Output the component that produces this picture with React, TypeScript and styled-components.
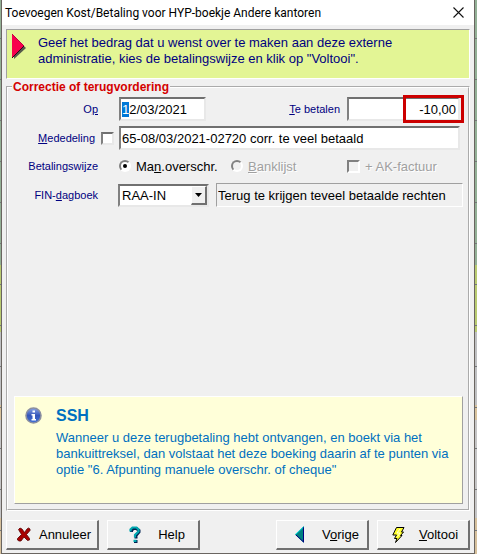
import React, { useEffect, useRef } from "react";
import styled, { createGlobalStyle, css } from "styled-components";

const navy = "#000080";

const GlobalStyle = createGlobalStyle`
  * { box-sizing: border-box; }
  body {
    margin: 0;
    font-family: "Liberation Sans", Arial, sans-serif;
    font-size: 13px;
    color: #000;
  }
  button, input, select { font: inherit; color: inherit; margin: 0; }
`;

const Desktop = styled.div`
  display: flex;
  min-height: 100vh;
  padding: 0 2px 0 1px;
  background:
    repeating-linear-gradient(transparent 0 38px, #76787a 38px 39px, transparent 39px 41px),
    linear-gradient(#93b096 0 265px, #b9cb70 265px 332px, #bfc0c2 332px 405px, #d8c29c 405px 420px, #c5c5c6 420px 518px, #d6c09c 518px);
`;

const Dialog = styled.main`
  flex: 1;
  min-width: 0;
  display: flex;
  flex-direction: column;
  background: #f0f0f0;
  border: solid #6a6560;
  border-width: 0 1px 1px;
`;

const TitleBar = styled.header`
  display: flex;
  justify-content: space-between;
  align-items: center;
  height: 25px;
  padding: 0 10px 0 3px;
  background: #fff;
  font-family: Roboto, "Noto Sans", sans-serif;
  font-size: 12px;
`;

const Title = styled.h1`
  margin: 0;
  font: inherit;
  white-space: nowrap;
`;

const CloseButton = styled.button`
  display: flex;
  padding: 0;
  border: 0;
  background: none;
`;

const Content = styled.div`
  flex: 1;
  display: flex;
  flex-direction: column;
  padding: 4px 4px 3px;
`;

const Banner = styled.section`
  display: flex;
  gap: 12px;
  height: 50px;
  padding: 4px 5px;
  background: #e3f595;
  border: 1px solid;
  border-color: #a0a0a0 #fff #fff #a0a0a0;
  color: ${navy};
  line-height: 16px;
  svg { flex: none; }
`;

const BannerText = styled.p`
  margin: 1px 0 0;
`;

const Group = styled.fieldset`
  flex: 1;
  display: flex;
  flex-direction: column;
  min-width: 0;
  margin: 1px 0 9px;
  padding: 2px 5px 5px 6px;
  border: 2px groove #fff;
`;

const Legend = styled.legend`
  margin-left: -2px;
  padding: 0 1px;
  color: #d40000;
  font-size: 12px;
  font-weight: bold;
  line-height: 14px;
`;

const Form = styled.div`
  display: grid;
  grid-template-columns: 84px minmax(0, 1fr);
  grid-template-rows: 26px 32px 24px 34px;
  column-gap: 21px;
  align-items: center;
`;

const FieldLabel = styled.label`
  color: ${navy};
  font-size: 11px;
  text-align: right;
  white-space: nowrap;
`;

const LabelWithCheck = styled.div`
  display: flex;
  justify-content: flex-end;
  align-items: center;
  gap: 6px;
  margin-right: -16px;
`;

const Row = styled.div<{ $inset?: number }>`
  display: flex;
  align-items: center;
  padding-right: ${(p) => p.$inset ?? 0}px;
`;

const sunken = css`
  border: 2px solid;
  border-color: #707070 #e8e8e8 #e8e8e8 #808080;
  background: #fff;
`;

const TextBox = styled.input<{ $width?: string; $readonly?: boolean }>`
  ${sunken}
  width: ${(p) => p.$width ?? "100%"};
  height: 24px;
  padding: 0 1px;
  border-radius: 0;
  outline: none;
  ${(p) =>
    p.$readonly &&
    css`
      border-width: 1px;
      border-color: #a0a0a0 #fff #fff #a0a0a0;
      background: #f0f0f0;
    `}
  &::selection { background: #0078d7; color: #fff; }
`;

const AmountLabel = styled(FieldLabel)`
  margin: 0 7px 0 auto;
`;

const AmountBox = styled.div`
  position: relative;
  width: 113px;
  input { text-align: right; padding-right: 2px; }
`;

const Highlight = styled.span`
  position: absolute;
  top: -2px;
  right: -4px;
  width: 61px;
  height: 28px;
  border: 3px solid #cc0000;
  pointer-events: none;
`;

const CheckBox = styled.input.attrs({ type: "checkbox" })`
  ${sunken}
  appearance: none;
  flex: none;
  width: 13px;
  height: 13px;
  &:disabled { background: #f0f0f0; border-color: #808080 #fff #fff #808080; }
`;

const Radio = styled.input.attrs({ type: "radio" })`
  appearance: none;
  flex: none;
  display: grid;
  place-items: center;
  width: 12px;
  height: 12px;
  border: 2px solid;
  border-color: #808080 #fff #fff #808080;
  border-radius: 50%;
  background: #fff;
  &:checked::after {
    content: "";
    width: 4px;
    height: 4px;
    border-radius: 50%;
    background: #000;
  }
  &:disabled { background: #f0f0f0; }
`;

const Choice = styled.label<{ $disabled?: boolean }>`
  display: flex;
  align-items: center;
  gap: 5px;
  white-space: nowrap;
  ${(p) => p.$disabled && css`color: #a0a0a0; text-shadow: 1px 1px #fff;`}
`;

const Choices = styled.div`
  display: grid;
  grid-template-columns: 112px 116px auto;
  justify-content: start;
`;

const Combo = styled.div`
  ${sunken}
  flex: none;
  display: grid;
  width: 91px;
  height: 23px;
  margin: 0 7px 0 -1px;
  > * { grid-area: 1 / 1; }
`;

const Select = styled.select`
  appearance: none;
  width: 100%;
  height: 100%;
  padding: 0 18px 0 2px;
  border: 0;
  border-radius: 0;
  outline: none;
  background: #fff;
`;

const ComboArrow = styled.span`
  justify-self: end;
  display: grid;
  place-items: center;
  width: 16px;
  border: solid;
  border-width: 1px 2px 2px 1px;
  border-color: #fff #707070 #707070 #fff;
  background: #f0f0f0;
  pointer-events: none;
`;

const Note = styled.section`
  display: flex;
  gap: 14px;
  min-height: 108px;
  margin-top: auto;
  padding: 10px;
  background: #ffffd9;
  border: 1px solid;
  border-color: #fff #a0a0a0 #a0a0a0 #fff;
  color: #0070c0;
`;

const NoteIcon = styled.svg`
  flex: none;
  width: 17px;
  height: 17px;
`;

const NoteTitle = styled.h2`
  margin: 0 0 5px;
  font-size: 16px;
  line-height: 18px;
`;

const NoteText = styled.p`
  margin: 0;
  line-height: 16px;
`;

const Actions = styled.footer`
  display: grid;
  grid-template-columns: 93px 93px 1fr 93px 93px;
  column-gap: 8px;
`;

const ActionButton = styled.button<{ $gap: number; $inset?: number }>`
  display: flex;
  align-items: center;
  justify-content: center;
  gap: ${(p) => p.$gap}px;
  height: 30px;
  padding: 0 0 0 ${(p) => p.$inset ?? 4}px;
  border: solid;
  border-width: 1px 2px 2px 1px;
  border-color: #fff #707070 #707070 #fff;
  background: #f0f0f0;
  svg { flex: none; }
`;

const Spacer = styled.span``;

export default function App() {
  const dateRef = useRef<HTMLInputElement>(null);

  useEffect(() => {
    dateRef.current?.focus();
    dateRef.current?.setSelectionRange(0, 1);
  }, []);

  return (
    <>
      <GlobalStyle />
      <Desktop>
        <Dialog>
          <TitleBar>
            <Title>Toevoegen Kost/Betaling voor HYP-boekje Andere kantoren</Title>
            <CloseButton type="button" aria-label="Sluiten">
              <svg width="11" height="11" viewBox="0 0 11 11" stroke="#111" strokeWidth="1.1">
                <path d="M.5.5l10 10M10.5.5l-10 10" />
              </svg>
            </CloseButton>
          </TitleBar>
          <Content>
            <Banner>
              <svg width="14" height="25" viewBox="0 0 14 25">
                <path d="M2 3 14 14 2 25Z" fill="#55584a" />
                <path d="M0 0 12 12 0 24Z" fill="#f8004c" />
                <path d="M0 0 12 12" stroke="#c00040" />
                <path d="M0 24 12 12" stroke="#300018" />
              </svg>
              <BannerText>
                Geef het bedrag dat u wenst over te maken aan deze externe
                <br />
                administratie, kies de betalingswijze en klik op "Voltooi".
              </BannerText>
            </Banner>
            <Group>
              <Legend>Correctie of terugvordering</Legend>
              <Form>
                <FieldLabel htmlFor="date">O<u>p</u></FieldLabel>
                <Row $inset={3}>
                  <TextBox id="date" ref={dateRef} $width="87px" defaultValue="12/03/2021" />
                  <AmountLabel htmlFor="amount"><u>T</u>e betalen</AmountLabel>
                  <AmountBox>
                    <TextBox id="amount" defaultValue="-10,00" />
                    <Highlight />
                  </AmountBox>
                </Row>

                <LabelWithCheck>
                  <FieldLabel htmlFor="memo-on"><u>M</u>ededeling</FieldLabel>
                  <CheckBox id="memo-on" />
                </LabelWithCheck>
                <Row $inset={3}>
                  <TextBox aria-label="Mededeling" defaultValue="65-08/03/2021-02720 corr. te veel betaald" />
                </Row>

                <FieldLabel as="span">Betalingswijze</FieldLabel>
                <Choices role="radiogroup" aria-label="Betalingswijze">
                  <Choice>
                    <Radio name="method" defaultChecked />
                    <span>Ma<u>n</u>.overschr.</span>
                  </Choice>
                  <Choice $disabled>
                    <Radio name="method" disabled />
                    <span><u>B</u>anklijst</span>
                  </Choice>
                  <Choice $disabled>
                    <CheckBox disabled />
                    <span>+ AK-factuur</span>
                  </Choice>
                </Choices>

                <FieldLabel htmlFor="journal">FIN-<u>d</u>agboek</FieldLabel>
                <Row>
                  <Combo>
                    <Select id="journal" defaultValue="RAA-IN">
                      <option>RAA-IN</option>
                    </Select>
                    <ComboArrow>
                      <svg width="7" height="4" viewBox="0 0 7 4"><path d="M0 0H7L3.5 4Z" /></svg>
                    </ComboArrow>
                  </Combo>
                  <TextBox
                    $readonly
                    readOnly
                    aria-label="Omschrijving dagboek"
                    value="Terug te krijgen teveel betaalde rechten"
                  />
                </Row>
              </Form>
              <Note>
                <NoteIcon viewBox="0 0 17 17">
                  <defs>
                    <linearGradient id="ball" x2="0" y2="1">
                      <stop stopColor="#8aa6e8" />
                      <stop offset=".5" stopColor="#3656b8" />
                      <stop offset="1" stopColor="#3f70d8" />
                    </linearGradient>
                  </defs>
                  <circle cx="8.5" cy="8.5" r="7.5" fill="url(#ball)" stroke="#8b8fa0" strokeWidth="1.6" />
                  <path d="M7.5 3.5h2.5v2H7.5ZM6.5 7H10v5h1v1.5H6.5V12h1V8.5h-1Z" fill="#fff" />
                </NoteIcon>
                <div>
                  <NoteTitle>SSH</NoteTitle>
                  <NoteText>
                    Wanneer u deze terugbetaling hebt ontvangen, en boekt via het
                    <br />
                    bankuittreksel, dan volstaat het deze boeking daarin af te punten via
                    <br />
                    optie "6. Afpunting manuele overschr. of cheque"
                  </NoteText>
                </div>
              </Note>
            </Group>
            <Actions>
              <ActionButton type="button" $gap={8}>
                <svg width="14" height="15" viewBox="0 0 14 15">
                  <path d="M1.500 2.500 3 1l2 1 2.500 3.500L10 2l1.500-1L13 2v1.500L9.500 7.500 12.500 11.500V13l-2 .500L7 10l-3 4H2L.500 13v-1.500L4.500 7.500Z" fill="#a80000" stroke="#580000" strokeWidth=".8" />
                </svg>
                <span>Annuleer</span>
              </ActionButton>
              <ActionButton type="button" $gap={17} $inset={8}>
                <svg width="12" height="17" viewBox="0 0 12 17" fill="none">
                  <path d="M2.500 6V4.500l2-2h3l2.500 2v1.500L7 9.500v3M5 15.500h3.500" stroke="#002050" strokeWidth="3" />
                  <path d="M1.500 5.500V3.500l2-2h4l2 2v2L6 9v2.500M4.500 14.800H7.500" stroke="#00a8b0" strokeWidth="2.200" />
                </svg>
                <span>Help</span>
              </ActionButton>
              <Spacer />
              <ActionButton type="button" $gap={17} $inset={10}>
                <svg width="10" height="17" viewBox="0 0 10 17">
                  <path d="M9 0v17L0 8.500Z" fill="#008080" />
                  <path d="M8.500 1v15L1 9" fill="none" stroke="#000080" />
                  <path d="M8.500 1 .500 8.500" stroke="#00e0e0" />
                </svg>
                <span>V<u>o</u>rige</span>
              </ActionButton>
              <ActionButton type="button" $gap={14}>
                <svg width="13" height="16" viewBox="0 0 13 16">
                  <path d="M4.500.500h7.500L9.500 5H11.500L8.500 8.500H10L3.500 15.500 5 11.500H2.500L4.500 8H.800Z" fill="#ffff30" stroke="#000" strokeLinejoin="round" />
                  <path d="m8 2-3 4h3L5.500 9.500" fill="none" stroke="#fff" strokeWidth=".8" />
                </svg>
                <span><u>V</u>oltooi</span>
              </ActionButton>
            </Actions>
          </Content>
        </Dialog>
      </Desktop>
    </>
  );
}
